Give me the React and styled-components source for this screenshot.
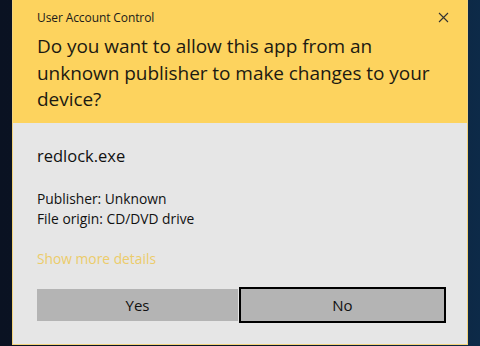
import React from 'react';
import styled, { createGlobalStyle } from 'styled-components';

const Global = createGlobalStyle`
  html, body {
    margin: 0;
    padding: 0;
    height: 100%;
  }
  body {
    background: linear-gradient(90deg, #0a1222 0%, #0b1528 60%, #0d2a48 100%);
    font-family: "Open Sans", "Noto Sans", sans-serif;
    overflow: hidden;
  }
`;

const Screen = styled.div`
  height: 346px;
  padding-left: 12px;
  box-sizing: border-box;
`;

const Dialog = styled.div`
  width: 456px;
  height: 345px;
  box-sizing: border-box;
  border: 1px solid #f3d37c;
  border-top: none;
  background: #e6e6e6;
  display: flex;
  flex-direction: column;
`;

const Header = styled.div`
  background: #fdd35e;
  height: 123px;
  padding: 6px 18px 0 24px;
  box-sizing: border-box;
  color: #1a1a1a;
`;

const TitleRow = styled.div`
  display: flex;
  justify-content: space-between;
  align-items: center;
  height: 22px;
`;

const Caption = styled.span`
  font-size: 12px;
  letter-spacing: -0.1px;
`;

const Close = styled.svg`
  width: 11px;
  height: 11px;
`;

const Question = styled.h1`
  margin: 5px 0 0;
  font-weight: 400;
  font-size: 19px;
  letter-spacing: -0.05px;
  line-height: 26.5px;
  color: #1c1a12;
`;

const Body = styled.div`
  flex: 1;
  padding: 22px 21px 0 24px;
  display: flex;
  flex-direction: column;
  color: #111;
`;

const AppName = styled.div`
  font-size: 16.5px;
  line-height: 22px;
`;

const Info = styled.div`
  margin-top: 22px;
  font-size: 13.8px;
  line-height: 20px;
`;

const MoreLink = styled.a`
  margin-top: 20px;
  font-size: 13.8px;
  line-height: 20px;
  color: #eccc6a;
  cursor: pointer;
`;

const Buttons = styled.div`
  margin-top: 18px;
  display: flex;
  align-items: center;
  gap: 1px;
`;

const Button = styled.button`
  flex: ${(p) => (p.$focused ? '0 0 207px' : '0 0 201px')};
  height: ${(p) => (p.$focused ? '36px' : '32px')};
  box-sizing: border-box;
  background: #b4b4b4;
  border: ${(p) => (p.$focused ? '2px solid #000' : 'none')};
  font-family: inherit;
  font-size: 15px;
  color: #111;
  padding: 0;
`;

export default function App() {
  return (
    <>
      <Global />
      <Screen>
        <Dialog>
          <Header>
            <TitleRow>
              <Caption>User Account Control</Caption>
              <Close viewBox="0 0 11 11">
                <path d="M1 1 L10 10 M10 1 L1 10" stroke="#333" strokeWidth="1.1" fill="none" />
              </Close>
            </TitleRow>
            <Question>
              Do you want to allow this app from an unknown publisher to make changes to your device?
            </Question>
          </Header>
          <Body>
            <AppName>redlock.exe</AppName>
            <Info>
              Publisher: Unknown
              <br />
              File origin: CD/DVD drive
            </Info>
            <MoreLink>Show more details</MoreLink>
            <Buttons>
              <Button>Yes</Button>
              <Button $focused>No</Button>
            </Buttons>
          </Body>
        </Dialog>
      </Screen>
    </>
  );
}
